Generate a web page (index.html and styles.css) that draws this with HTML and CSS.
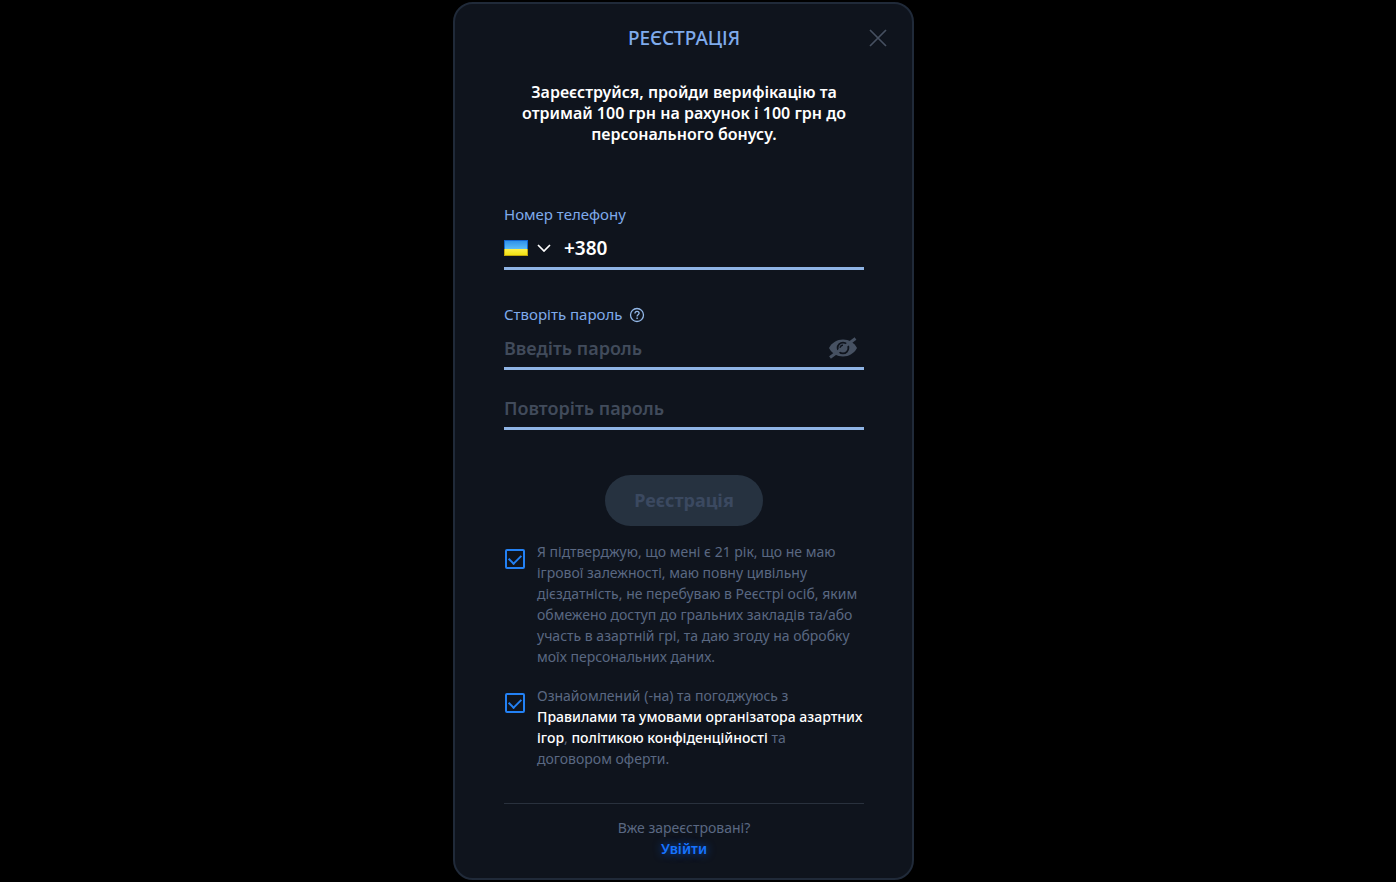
FILE: index.html
```html
<!DOCTYPE html>
<html lang="uk">

<head>
    <meta charset="UTF-8">
    <meta name="viewport" content="width=device-width, initial-scale=1.0">
    <title>Реєстрація</title>
    <link rel="stylesheet" href="styles.css">
</head>

<body>
    <main class="modal">
        <header class="modal-header">
            <h1 class="modal-title">РЕЄСТРАЦІЯ</h1>
            <button class="close" type="button" aria-label="Закрити">
                <svg width="18" height="18" viewBox="0 0 18 18" fill="none" stroke="currentColor" stroke-width="1.7">
                    <path d="M1 1l16 16M17 1L1 17" />
                </svg>
            </button>
        </header>

        <p class="promo">Зареєструйся, пройди верифікацію та отримай 100 грн на рахунок і 100 грн до персонального бонусу.</p>

        <form class="form">
            <div class="field">
                <label class="label" for="phone">Номер телефону</label>
                <div class="control">
                    <div class="country">
                        <svg class="flag" width="24" height="16" viewBox="0 0 24 16">
                            <defs>
                                <linearGradient id="flag-blue" x1="0" y1="0" x2="0" y2="1">
                                    <stop offset="0" stop-color="#2f92ea" />
                                    <stop offset="1" stop-color="#5cbcf6" />
                                </linearGradient>
                                <linearGradient id="flag-yellow" x1="0" y1="0" x2="0" y2="1">
                                    <stop offset="0" stop-color="#fff04a" />
                                    <stop offset="1" stop-color="#f2e312" />
                                </linearGradient>
                            </defs>
                            <rect width="24" height="9" fill="#1265cf" />
                            <rect y="9" width="24" height="7" fill="#c4a80c" />
                            <rect x="1" y="1" width="22" height="8" fill="url(#flag-blue)" />
                            <rect x="1" y="9" width="22" height="6" fill="url(#flag-yellow)" />
                        </svg>
                        <svg class="chevron" width="14" height="8" viewBox="0 0 14 8" fill="none" stroke="#fff" stroke-width="1.7">
                            <path d="M1 1l6 6 6-6" />
                        </svg>
                        <select class="country-select" aria-label="Країна">
                            <option>Україна</option>
                        </select>
                    </div>
                    <input class="input phone" id="phone" type="tel" value="+380">
                </div>
            </div>

            <div class="field">
                <div class="label-row">
                    <label class="label" for="password">Створіть пароль</label>
                    <button class="hint" type="button" aria-label="Підказка">
                        <svg width="16" height="16" viewBox="0 0 16 16" fill="none" stroke="currentColor">
                            <circle cx="8" cy="8" r="6.5" stroke-width="1.3" />
                            <path d="M5.9 6.6c0-1.4.9-2.2 2.1-2.2s2.1.8 2.1 1.9c0 1.5-2 1.6-2 3.2" stroke-width="1.3" />
                            <path d="M8.1 10.6v1.4" stroke-width="1.4" />
                        </svg>
                    </button>
                </div>
                <div class="control">
                    <input class="input" id="password" type="password" placeholder="Введіть пароль">
                    <button class="eye" type="button" aria-label="Показати пароль">
                        <svg width="30" height="22" viewBox="0 0 30 22" fill="none">
                            <path d="M1 11C4 5.500 9 2.500 15 2.500S26 5.500 29 11C26 16.500 21 19.500 15 19.500S4 16.500 1 11z" fill="#465162" />
                            <circle cx="15" cy="11" r="5.400" stroke="#0f141d" stroke-width="1.800" />
                            <path d="M12.300 11c0-1.700 1-2.700 2.700-2.700" stroke="#0f141d" stroke-width="1.600" />
                            <path d="M2 20.500L27.500 1.500" stroke="#465162" stroke-width="3" />
                        </svg>
                    </button>
                </div>
            </div>

            <div class="control repeat">
                <input class="input" type="password" placeholder="Повторіть пароль" aria-label="Повторіть пароль">
            </div>

            <button class="submit" type="submit" disabled>Реєстрація</button>

            <div class="agree">
                <input class="check" id="age" type="checkbox" checked>
                <label for="age">Я підтверджую, що мені є 21 рік, що не маю ігрової залежності, маю повну цивільну дієздатність, не перебуваю в Реєстрі осіб, яким обмежено доступ до гральних закладів та/або участь в азартній грі, та даю згоду на обробку моїх персональних даних.</label>
            </div>

            <div class="agree">
                <input class="check" id="rules" type="checkbox" checked>
                <label for="rules">Ознайомлений (-на) та погоджуюсь з <a href="#">Правилами та умовами організатора азартних ігор</a>, <a href="#">політикою конфіденційності</a> та<br>договором оферти.</label>
            </div>
        </form>

        <footer class="modal-footer">
            <p>Вже зареєстровані?</p>
            <a class="login" href="#">Увійти</a>
        </footer>
    </main>
</body>

</html>
```
FILE: styles.css
```css
* {
    box-sizing: border-box;
}

body {
    margin: 0;
    padding: 2px 29px 3px 0;
    background: #000;
    font-family: "Noto Sans", "Open Sans", sans-serif;
    font-size: 14px;
    line-height: 21px;
    color: #5a6882;
}

h1,
p {
    margin: 0;
}

button,
input {
    font-family: inherit;
}

button {
    padding: 0;
    border: 0;
    background: none;
    cursor: pointer;
}

svg {
    display: block;
}

.modal {
    width: 100%;
    max-width: 461px;
    margin: 0 auto;
    padding: 22px 48px 19px 49px;
    border: 2px solid #202a39;
    border-radius: 20px;
    background: #0f141d;
}

.modal-header {
    position: relative;
}

.modal-title {
    font-size: 19px;
    font-weight: 500;
    line-height: 24px;
    text-align: center;
    color: #7fabec;
}

.close {
    position: absolute;
    top: 3px;
    right: -23px;
    color: #465060;
}

.promo {
    margin-top: 32px;
    padding: 0 16px;
    font-size: 16px;
    font-weight: 600;
    text-align: center;
    color: #fff;
}

.field {
    margin-top: 34px;
}

.promo + .form .field:first-child {
    margin-top: 59px;
}

.label-row {
    display: flex;
    align-items: center;
    gap: 7px;
}

.label {
    display: block;
    font-size: 15px;
    color: #7fabec;
}

.hint {
    color: #93b8e8;
}

.control {
    display: flex;
    align-items: center;
    height: 45px;
    padding-top: 3px;
    border-bottom: 3px solid #8fb4e5;
}

.country {
    position: relative;
    display: flex;
    align-items: center;
    gap: 9px;
    margin-right: 13px;
}

.country-select {
    position: absolute;
    inset: 0;
    width: 100%;
    opacity: 0;
}

.input {
    flex: 1;
    min-width: 0;
    padding: 0;
    border: 0;
    outline: 0;
    background: none;
    font-size: 18px;
    font-weight: 600;
    color: #fff;
}

.phone {
    font-size: 19px;
}

.input::placeholder {
    color: #414b5b;
    opacity: 1;
}

.eye {
    margin-right: 6px;
}

.repeat {
    margin-top: 15px;
}

.submit {
    display: block;
    width: 158px;
    height: 51px;
    margin: 45px auto 15px;
    padding-bottom: 2px;
    border-radius: 26px;
    background: #263240;
    font-size: 18px;
    font-weight: 700;
    color: #3b4960;
}

.agree {
    display: flex;
    align-items: flex-start;
    gap: 12px;
    margin-bottom: 18px;
}

.agree a {
    color: #fff;
    font-weight: 500;
    text-decoration: none;
}

.check {
    display: grid;
    place-items: center;
    flex: none;
    width: 20px;
    height: 20px;
    margin: 8px 0 0 1px;
    border: 2px solid #2381f4;
    border-radius: 2px;
    appearance: none;
}

.check:checked::before {
    content: "";
    width: 10px;
    height: 6px;
    margin-bottom: 3px;
    border: solid #2381f4;
    border-width: 0 0 2px 2px;
    transform: rotate(-45deg);
}

.modal-footer {
    margin-top: 34px;
    padding-top: 13px;
    border-top: 1px solid #29313d;
    text-align: center;
}

.login {
    font-weight: 600;
    color: #1673ff;
    text-decoration: none;
    text-shadow: 0 0 8px #0a4dbb;
}
```
